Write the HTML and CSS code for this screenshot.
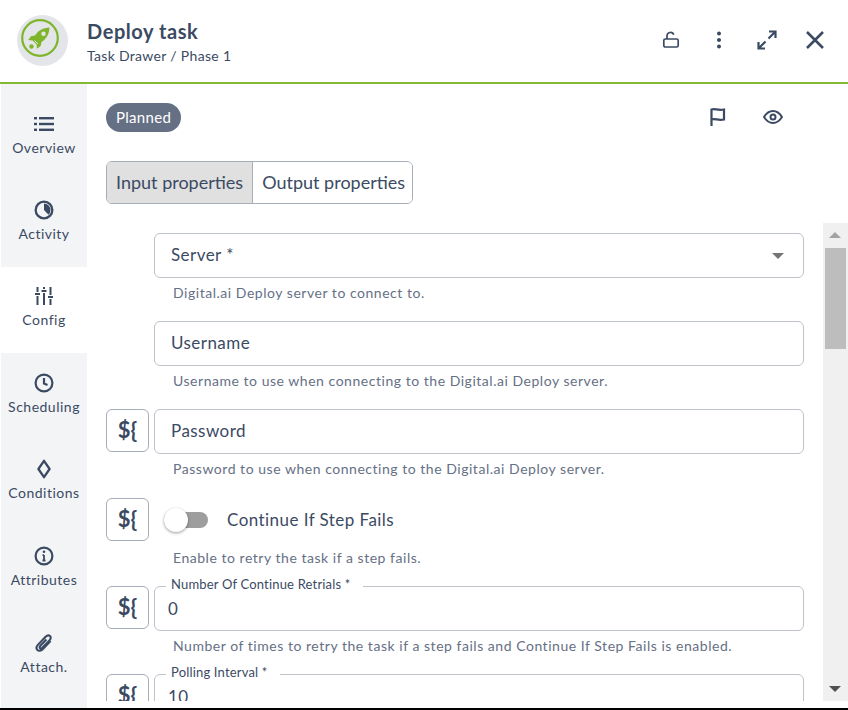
FILE: index.html
```html
<!DOCTYPE html>
<html lang="en">

<head>
    <meta charset="UTF-8" />
    <title>Deploy task</title>
    <link rel="stylesheet" href="styles.css">
</head>

<body>

    <div class="drawer">
        <header class="drawer-header">
            <div class="task-avatar">
                <svg viewBox="0 0 40 40" width="40" height="40" fill="none">
                    <circle cx="20" cy="20" r="17.8" stroke="#7fb52b" stroke-width="2.2" />
                    <path d="M29.500 9.500c-6.500.3-11 2.800-14.500 8l-4 .8-2.800 3.800 4.300.3 4.100 4.100.3 4.300 3.800-2.800.8-4c5.200-3.500 7.700-8 8-14.500z" fill="#7fb52b" />
                    <circle cx="23.500" cy="15.800" r="2.200" fill="#e3e5e9" />
                    <path d="M14.500 22.500 18 26" stroke="#e3e5e9" stroke-width="1" />
                    <circle cx="11.500" cy="28.500" r="2.200" fill="#7fb52b" />
                </svg>
            </div>
            <div class="task-title">
                <h1>Deploy task</h1>
                <p>Task Drawer / Phase 1</p>
            </div>
            <div class="header-actions">
                <svg class="action-icon" viewBox="0 0 20 20" fill="none" stroke="#3b4a63" stroke-width="1.700">
                    <rect x="2.800" y="9" width="14.400" height="8" rx="1.500" />
                    <path d="M6 9V6a3.500 3.500 0 0 1 6.800-1.200" />
                </svg>
                <svg class="action-icon" viewBox="0 0 20 20" fill="#3b4a63">
                    <circle cx="10" cy="3.500" r="2" />
                    <circle cx="10" cy="10" r="2" />
                    <circle cx="10" cy="16.500" r="2" />
                </svg>
                <svg class="action-icon" viewBox="0 0 20 20" fill="none" stroke="#3b4a63" stroke-width="2.200">
                    <path d="M11.500 8.500 18 2M12 1.500h6.500V8M8.500 11.500 2 18M1.500 12v6.500H8" />
                </svg>
                <svg class="action-icon" viewBox="0 0 20 20" fill="none" stroke="#3b4a63" stroke-width="2.500">
                    <path d="M2 2l16 16M18 2 2 18" />
                </svg>
            </div>
        </header>

        <div class="drawer-body">
            <nav class="rail">
                <a class="rail-item">
                    <svg viewBox="0 0 20 20" fill="#3b4a63">
                        <rect x="0" y="3" width="3" height="2.400" />
                        <rect x="0" y="8.800" width="3" height="2.400" />
                        <rect x="0" y="14.600" width="3" height="2.400" />
                        <rect x="5" y="3" width="15" height="2.400" />
                        <rect x="5" y="8.800" width="15" height="2.400" />
                        <rect x="5" y="14.600" width="15" height="2.400" />
                    </svg>
                    Overview
                </a>
                <a class="rail-item">
                    <svg viewBox="0 0 20 20" fill="#3b4a63">
                        <path d="M10 .5a9.500 9.500 0 1 0 0 19 9.500 9.500 0 0 0 0-19zm0 2.300a7.200 7.200 0 1 1-7.200 7.200A7.200 7.200 0 0 1 10 2.800z" />
                        <path d="M10 3.500a6.500 6.500 0 0 1 6.500 6.500 6.500 6.500 0 0 1-2 4.700L10 10z" />
                    </svg>
                    Activity
                </a>
                <a class="rail-item active">
                    <svg viewBox="0 0 20 20" fill="none" stroke="#3b4a63" stroke-width="2">
                        <path d="M3.500 1v5M3.500 10v9M10 1v2M10 7v12M16.500 1v8M16.500 13v6M1 8h5M7.500 5h5M14 11h5" />
                    </svg>
                    Config
                </a>
                <a class="rail-item">
                    <svg viewBox="0 0 20 20" fill="none" stroke="#3b4a63" stroke-width="2.200">
                        <circle cx="10" cy="10" r="8.400" />
                        <path d="M10 5v5.500l3.500 1.500" />
                    </svg>
                    Scheduling
                </a>
                <a class="rail-item">
                    <svg viewBox="0 0 20 20" fill="none" stroke="#3b4a63" stroke-width="2.300">
                        <path d="M10 1.800 15.600 10 10 18.200 4.400 10z" stroke-linejoin="round" />
                    </svg>
                    Conditions
                </a>
                <a class="rail-item">
                    <svg viewBox="0 0 20 20" fill="none" stroke="#3b4a63" stroke-width="2.200">
                        <circle cx="10" cy="10" r="8.400" />
                        <path d="M10 9v5.500M8.500 9.200H10M8.500 14.500h3" stroke-width="1.800" />
                        <circle cx="10" cy="5.800" r="1.300" fill="#3b4a63" stroke="none" />
                    </svg>
                    Attributes
                </a>
                <a class="rail-item">
                    <svg viewBox="0 0 20 20" fill="none" stroke="#3b4a63" stroke-width="2.100">
                        <path d="M16.500 8 8.700 16.200c-1.700 1.800-4 2-5.300.7s-1-3.500.7-5.300l7.500-7.800c1.500-1.500 3.300-1.800 4.400-.7s.9 2.900-.6 4.400l-7 7.300c-.8.800-1.800 1-2.400.4s-.4-1.600.4-2.400l6-6.300" />
                    </svg>
                    Attach.
                </a>
            </nav>

            <main class="content">
                <div class="status-row">
                    <span class="status-pill">Planned</span>
                    <div class="status-actions">
                        <svg viewBox="0 0 20 20" fill="none" stroke="#3b4a63" stroke-width="2.200">
                            <path d="M3.500 19V2.500c4-1.500 5 1.200 12.500 0v10c-6.500 1.500-8.500-1.500-12.500 0" />
                        </svg>
                        <svg viewBox="0 0 20 20" fill="none" stroke="#3b4a63" stroke-width="2">
                            <path d="M1 10c2.500-4 5.500-6 9-6s6.500 2 9 6c-2.500 4-5.500 6-9 6s-6.500-2-9-6z" />
                            <circle cx="10" cy="10" r="2.500" />
                        </svg>
                    </div>
                </div>

                <div class="tabs">
                    <button class="tab selected">Input properties</button>
                    <button class="tab">Output properties</button>
                </div>

                <div class="form-scroll">
                    <div class="form-fields">
                        <div class="field-row">
                            <div class="field-main">
                                <div class="input-box">Server *<span class="select-arrow"></span></div>
                                <p class="help">Digital.ai Deploy server to connect to.</p>
                            </div>
                        </div>
                        <div class="field-row">
                            <div class="field-main">
                                <div class="input-box">Username</div>
                                <p class="help">Username to use when connecting to the Digital.ai Deploy server.</p>
                            </div>
                        </div>
                        <div class="field-row">
                            <button class="var-btn">${</button>
                            <div class="field-main">
                                <div class="input-box">Password</div>
                                <p class="help">Password to use when connecting to the Digital.ai Deploy server.</p>
                            </div>
                        </div>
                        <div class="field-row switch-row">
                            <button class="var-btn">${</button>
                            <div class="field-main">
                                <div class="switch-line">
                                    <span class="switch"><span class="switch-knob"></span></span>
                                    Continue If Step Fails
                                </div>
                                <p class="help">Enable to retry the task if a step fails.</p>
                            </div>
                        </div>
                        <div class="field-row">
                            <button class="var-btn">${</button>
                            <div class="field-main">
                                <div class="input-box filled">
                                    <label>Number Of Continue Retrials *</label>0
                                </div>
                                <p class="help">Number of times to retry the task if a step fails and Continue If Step Fails is enabled.</p>
                            </div>
                        </div>
                        <div class="field-row">
                            <button class="var-btn">${</button>
                            <div class="field-main">
                                <div class="input-box filled">
                                    <label>Polling Interval *</label>10
                                </div>
                            </div>
                        </div>
                    </div>
                    <div class="scrollbar">
                        <span class="arrow-up"></span>
                        <span class="thumb"></span>
                        <span class="arrow-down"></span>
                    </div>
                </div>
            </main>
        </div>
    </div>

</body>

</html>
```

FILE: styles.css
```css
* {
    box-sizing: border-box;
}

html,
body {
    margin: 0;
    height: 710px;
    overflow: hidden;
    background: #000;
}

body {
    font-family: Lato, "Open Sans", sans-serif;
    color: #3b4a63;
}

.drawer {
    height: 708px;
    background: #fff;
    display: flex;
    flex-direction: column;
}

.drawer-header {
    height: 84px;
    flex: none;
    display: flex;
    align-items: center;
    border-bottom: 2px solid #85b935;
    padding: 0 23px 2px 17px;
}

.task-avatar {
    width: 51px;
    height: 51px;
    flex: none;
    border-radius: 50%;
    background: #e3e5e9;
    display: flex;
    align-items: center;
    justify-content: center;
    margin-right: 19px;
}

/* the ring sits a little up and left of the grey disc */
.task-avatar svg {
    margin: 0 6px 4px 0;
}

.task-title {
    padding-top: 4px;
}

.task-title h1 {
    margin: 0 0 2px;
    font-size: 20px;
    font-weight: 700;
    line-height: 26px;
    letter-spacing: 0.56px;
}

.task-title p {
    margin: 0;
    font-size: 14px;
    line-height: 20px;
    letter-spacing: 0.32px;
}

.header-actions {
    margin-left: auto;
    display: flex;
    align-items: center;
    gap: 28px;
}

.action-icon {
    width: 20px;
    height: 20px;
}

.drawer-body {
    flex: 1;
    display: flex;
    min-height: 0;
}

.rail {
    width: 86px;
    flex: none;
    margin-left: 1px;
    padding-top: 10px;
    background: #f3f4f6;
    overflow: hidden;
}

.rail-item {
    height: 86.4px;
    display: flex;
    flex-direction: column;
    align-items: center;
    padding-top: 19.6px;
    font-size: 14px;
    line-height: 20px;
    letter-spacing: 0.5px;
}

.rail-item:last-child {
    padding-top: 20.6px;
}

.rail-item svg {
    width: 20px;
    height: 20px;
    margin-bottom: 4px;
}

.rail-item.active {
    background: #fff;
}

.content {
    flex: 1;
    min-width: 0;
    display: flex;
    flex-direction: column;
    padding-top: 19px;
}

.status-row {
    display: flex;
    align-items: center;
    justify-content: space-between;
    padding-left: 19px;
    padding-right: 65px;
}

.status-pill {
    height: 29px;
    padding: 0 10px;
    border-radius: 15px;
    background: #667085;
    color: #fff;
    font-size: 15px;
    line-height: 29px;
    letter-spacing: 0.3px;
}

.status-actions {
    display: flex;
    gap: 35px;
    margin-bottom: 2px;
}

.status-actions svg {
    width: 20px;
    height: 20px;
}

.tabs {
    display: flex;
    margin: 29px 0 0 19px;
    width: 307px;
    height: 43px;
    border: 1px solid #a7adb8;
    border-radius: 6px;
    overflow: hidden;
}

.tab {
    border: none;
    background: #fff;
    font-family: inherit;
    font-size: 18px;
    color: #3b4a63;
    padding: 0 9px 1px;
    white-space: nowrap;
}

.tab.selected {
    background: #e0e0e0;
    border-right: 1px solid #a7adb8;
}

.form-scroll {
    flex: 1;
    min-height: 0;
    display: flex;
    margin-top: 19px;
    height: 478px;
}

.form-fields {
    flex: 1;
    min-width: 0;
    overflow: hidden;
    padding: 10px 19px 0 19px;
    height: 478px;
}

.field-row {
    display: flex;
    justify-content: flex-end;
    gap: 5px;
    height: 88px;
}

.switch-row {
    margin-top: 1px;
}

.field-main {
    width: 650px;
}

.input-box {
    position: relative;
    height: 45px;
    border: 1px solid #bfc3ca;
    border-radius: 6px;
    padding: 0 16px;
    font-size: 17px;
    line-height: 41px;
    letter-spacing: 0.45px;
}

.input-box.filled {
    padding: 0 13px;
    line-height: 43px;
}

.input-box label {
    position: absolute;
    top: -12px;
    left: 11px;
    padding: 0 12px 0 5px;
    background: #fff;
    font-size: 13px;
    line-height: 18px;
    letter-spacing: 0.18px;
}

.select-arrow {
    position: absolute;
    right: 19px;
    top: 19px;
    border-left: 6px solid transparent;
    border-right: 6px solid transparent;
    border-top: 6px solid #757575;
}

.help {
    margin: 6px 0 0 19px;
    font-size: 14px;
    line-height: 18px;
    letter-spacing: 0.53px;
    color: #667085;
}

.var-btn {
    width: 43px;
    height: 43px;
    flex: none;
    padding: 0 0 3px;
    background: #fff;
    border: 1px solid #a7adb8;
    border-radius: 6px;
    font-family: inherit;
    font-size: 22px;
    font-weight: 700;
    color: #3b4a63;
}

.switch-line {
    height: 45px;
    display: flex;
    align-items: center;
    gap: 19px;
    padding: 0 0 2px 10px;
    font-size: 17px;
    letter-spacing: 0.45px;
}

.switch {
    position: relative;
    width: 44px;
    height: 16px;
    display: block;
    border-radius: 8px;
    background: #9e9e9e;
}

.switch-knob {
    position: absolute;
    left: 0;
    top: -4px;
    width: 24px;
    height: 24px;
    border-radius: 50%;
    background: #fff;
    box-shadow: 0 1px 3px rgba(0, 0, 0, 0.4);
}

.scrollbar {
    width: 25px;
    flex: none;
    background: #f0f0f0;
    position: relative;
    height: 478px;
}

.arrow-up,
.arrow-down {
    position: absolute;
    left: 6px;
    border-left: 6px solid transparent;
    border-right: 6px solid transparent;
}

.arrow-up {
    top: 9px;
    border-bottom: 6px solid #a3a3a3;
}

.arrow-down {
    bottom: 9px;
    border-top: 6px solid #505050;
}

.thumb {
    position: absolute;
    left: 2px;
    right: 2px;
    top: 25px;
    height: 101px;
    background: #bdbdbd;
}
```
